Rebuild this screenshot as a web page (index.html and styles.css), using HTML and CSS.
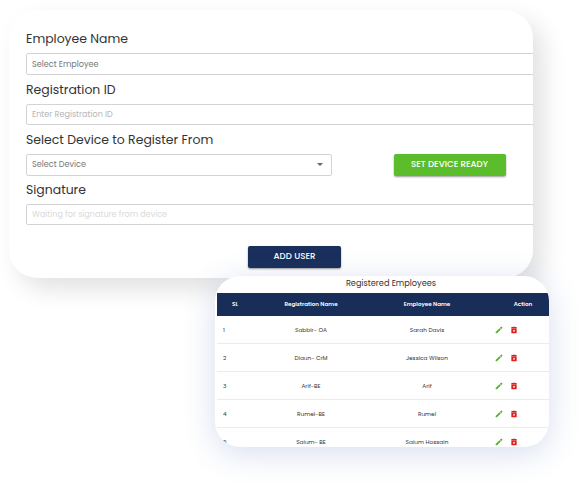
FILE: index.html
```
<!DOCTYPE html>
<html lang="en">
<head>
<meta charset="utf-8">
<title>Register Employee</title>
<link rel="stylesheet" href="styles.css">
</head>
<body>
<svg class="sprite" aria-hidden="true">
  <symbol id="pencil" viewBox="0 0 24 24"><path d="M2 18v4h4L17.500 10.500l-4-4zM22 6a1.500 1.500 0 0 0 0-2l-2-2a1.500 1.500 0 0 0-2 0l-3.500 3.500 4 4z"/></symbol>
  <symbol id="trash" viewBox="0 0 24 24"><path fill-rule="evenodd" d="M4 7h16v13a2 2 0 0 1-2 2H6a2 2 0 0 1-2-2zM15.500 2l1 1H20v3H4V3h3.500l1-1zM12 11a3 3 0 1 0 0 6 3 3 0 0 0 0-6z"/><circle cx="12" cy="14" r="1.400"/></symbol>
</svg>
<main class="stage">
  <form class="form-card">
    <label class="label">Employee Name</label>
    <div class="field tall"><span>Select Employee</span></div>
    <label class="label">Registration ID</label>
    <div class="field light"><span>Enter Registration ID</span></div>
    <label class="label">Select Device to Register From</label>
    <div class="device-row">
      <div class="field tall select"><span>Select Device</span><i class="caret"></i></div>
      <button type="button" class="btn green">SET DEVICE READY</button>
    </div>
    <label class="label">Signature</label>
    <div class="field faint"><span>Waiting for signature from device</span></div>
    <button type="button" class="btn navy">ADD USER</button>
  </form>
  <section class="table-card">
    <h2>Registered Employees</h2>
    <div class="row head"><span>SL</span><span>Registration Name</span><span>Employee Name</span><span class="act">Action</span></div>
    <div class="row"><span class="no">1</span><span>Sabbir- OA</span><span>Sarah Davis</span><span class="icons"><svg class="edit"><use href="#pencil"/></svg><svg class="del"><use href="#trash"/></svg></span></div>
    <div class="row"><span class="no">2</span><span>Diaun- CrM</span><span>Jessica Wilson</span><span class="icons"><svg class="edit"><use href="#pencil"/></svg><svg class="del"><use href="#trash"/></svg></span></div>
    <div class="row"><span class="no">3</span><span>Arif-BE</span><span>Arif</span><span class="icons"><svg class="edit"><use href="#pencil"/></svg><svg class="del"><use href="#trash"/></svg></span></div>
    <div class="row"><span class="no">4</span><span>Rumel-BE</span><span>Rumel</span><span class="icons"><svg class="edit"><use href="#pencil"/></svg><svg class="del"><use href="#trash"/></svg></span></div>
    <div class="row"><span class="no">5</span><span>Saium- BE</span><span>Saium Hossain</span><span class="icons"><svg class="edit"><use href="#pencil"/></svg><svg class="del"><use href="#trash"/></svg></span></div>
  </section>
</main>
</body>
</html>
```
FILE: styles.css
```
* { box-sizing: border-box; }
body {
  margin: 0;
  background: #fff;
  color: #333;
  font-family: Poppins, Inter, "Open Sans", sans-serif;
}
.sprite { position: absolute; width: 0; height: 0; }
.stage { width: 583px; height: 482px; overflow: hidden; padding: 10px 0 0 9px; }
.form-card {
  width: 524px;
  height: 268px;
  padding: 19px 0 0 17px;
  overflow: hidden;
  border-radius: 28px;
  background: #fff;
  box-shadow: 10px 11px 24px rgba(0, 0, 0, .12);
}
.label { display: block; height: 20px; margin-bottom: 4px; line-height: 20px; font-size: 12.450px; white-space: nowrap; }
.field {
  display: flex;
  align-items: center;
  width: 530px;
  height: 21px;
  margin-bottom: 5px;
  padding: 0 5px;
  border: 1px solid #d3d3d3;
  border-radius: 2px;
  font-size: 8.100px;
  color: #777;
  white-space: nowrap;
}
.field.tall { height: 22px; }
.field.light { color: #b5b5b5; }
.field.faint { color: #dadada; }
.device-row { display: flex; justify-content: space-between; width: 479.500px; margin: -.5px 0 4.500px; }
.field.select { width: 306px; margin: 0; justify-content: space-between; padding-right: 8px; }
.caret { border: 3px solid transparent; border-top-color: #666; border-bottom: 0; }
.btn {
  border: 0;
  border-radius: 2px;
  padding: 0;
  height: 22px;
  font: 500 8.700px Poppins, Inter, sans-serif;
  color: #fff;
  white-space: nowrap;
  box-shadow: 0 1px 2px rgba(0, 0, 0, .4);
}
.green { width: 112px; background: #5bbd2b; }
.navy { display: block; width: 93px; margin: 20.500px 0 0 222px; background: #1a2f5b; }
.table-card {
  position: relative;
  width: 334px;
  height: 171px;
  margin: -2px 0 0 206px;
  padding-left: 2px;
  overflow: hidden;
  border-radius: 25px;
  background: #fff;
  box-shadow: 0 6px 32px rgba(50, 85, 170, .2);
}
h2 { margin: 0 0 0 16px; height: 16.500px; line-height: 14px; text-align: center; font-size: 8.200px; font-weight: 400; color: #333; }
.row {
  display: grid;
  grid-template-columns: 36px 116px 116px 64px;
  align-items: center;
  height: 28px;
  padding-top: 1px;
  border-bottom: 1px solid #ebebeb;
  font-size: 5.800px;
  text-align: center;
  white-space: nowrap;
}
.row.head { height: 23.500px; padding-top: 0; border: 0; background: #182e59; color: #fff; font-weight: 600; font-size: 5.600px; }
.no { padding-left: 6px; text-align: left; }
.act { padding-left: 12px; }
.icons { display: flex; gap: 7px; padding-left: 10px; }
.icons svg { width: 8px; height: 8px; }
.edit { fill: #4fb82a; }
.del { fill: #e02020; }
```
